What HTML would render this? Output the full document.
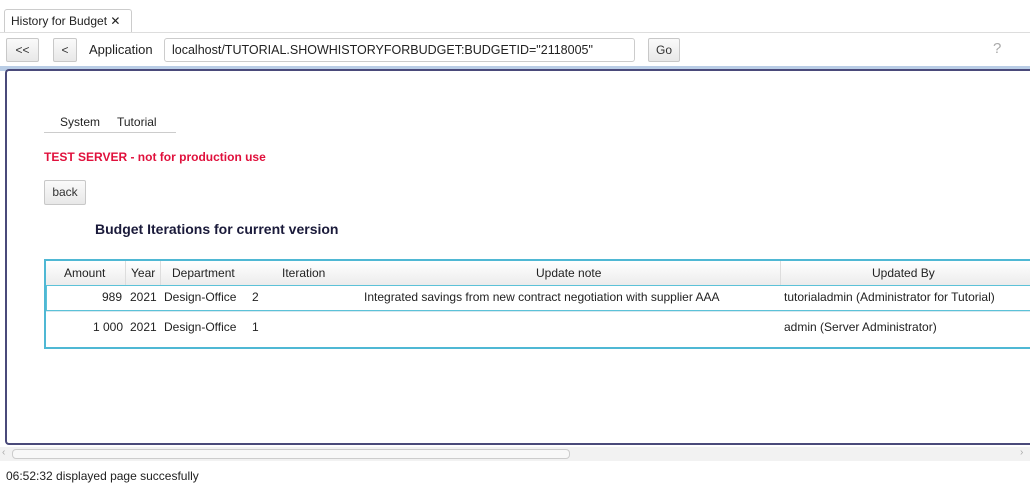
<!DOCTYPE html>
<html><head><style>
*{margin:0;padding:0;box-sizing:border-box}
body{width:1030px;height:487px;background:#fff;font-family:"Liberation Sans",sans-serif;font-size:12px;color:#222;position:relative;overflow:hidden}
.a{position:absolute;white-space:nowrap}
.btn{position:absolute;border:1px solid #c8c8c8;border-radius:2px;background:linear-gradient(#fafafa,#e8e8e8);text-align:center;font-size:12px;color:#333}
td,th{font-weight:normal;white-space:nowrap}
</style></head><body>
<div class="a" style="left:4px;top:9px;width:128px;height:24px;border:1px solid #ccc;border-bottom:none;border-radius:3px 3px 0 0;background:#fff;padding:4px 0 0 6px;font-size:12px">History for Budget ✕</div>
<div class="a" style="left:0;top:32px;width:1030px;height:1px;background:#ddd"></div>
<div class="btn" style="left:6px;top:38px;width:33px;height:24px;line-height:22px">&lt;&lt;</div>
<div class="btn" style="left:53px;top:38px;width:24px;height:24px;line-height:22px">&lt;</div>
<div class="a" style="left:89px;top:42px;font-size:13px">Application</div>
<div class="a" style="left:164px;top:38px;width:471px;height:24px;border:1px solid #ccc;border-radius:3px;padding:4px 0 0 7px;font-size:12.5px">localhost/TUTORIAL.SHOWHISTORYFORBUDGET:BUDGETID="2118005"</div>
<div class="btn" style="left:648px;top:38px;width:32px;height:24px;line-height:22px">Go</div>
<div class="a" style="left:993px;top:40px;color:#aaa;font-size:15px">?</div>
<div class="a" style="left:0;top:66px;width:1030px;height:5px;background:#b9cde6"></div>
<div class="a" style="left:5px;top:69px;width:1025px;height:376px;border:2px solid #4a4a7a;border-right:none;border-radius:4px 0 0 4px;background:#fff"></div>
<div class="a" style="left:44px;top:112px;width:132px;height:21px;border-bottom:1px solid #ccc"></div>
<div class="a" style="left:60px;top:115px">System</div>
<div class="a" style="left:117px;top:115px">Tutorial</div>
<div class="a" style="left:44px;top:150px;color:#e0103c;font-weight:bold;font-size:12px">TEST SERVER - not for production use</div>
<div class="btn" style="left:44px;top:180px;width:42px;height:25px;line-height:23px">back</div>
<div class="a" style="left:95px;top:221px;font-weight:bold;font-size:14px;color:#1a1a3a">Budget Iterations for current version</div>
<div class="a" style="left:44px;top:259px;width:986px;height:90px;border:2px solid #4fb8d4;border-right:none"></div>
<div class="a" style="left:46px;top:261px;width:984px;height:24px;background:linear-gradient(#fff,#ececec)"></div>
<div class="a" style="left:64px;top:266px">Amount</div>
<div class="a" style="left:125px;top:261px;width:1px;height:24px;background:#ddd"></div>
<div class="a" style="left:131px;top:266px">Year</div>
<div class="a" style="left:160px;top:261px;width:1px;height:24px;background:#ddd"></div>
<div class="a" style="left:172px;top:266px">Department</div>
<div class="a" style="left:282px;top:266px">Iteration</div>
<div class="a" style="left:536px;top:266px">Update note</div>
<div class="a" style="left:780px;top:261px;width:1px;height:24px;background:#ddd"></div>
<div class="a" style="left:872px;top:266px">Updated By</div>
<div class="a" style="left:46px;top:285px;width:984px;height:26px;border:1px solid #5cc2d8;border-right:none"></div>
<div class="a" style="left:46px;top:311px;width:984px;height:1px;background:#d8e8ef"></div>
<div class="a" style="left:102px;top:290px">989</div>
<div class="a" style="left:130px;top:290px">2021</div>
<div class="a" style="left:164px;top:290px">Design-Office</div>
<div class="a" style="left:252px;top:290px">2</div>
<div class="a" style="left:364px;top:290px">Integrated savings from new contract negotiation with supplier AAA</div>
<div class="a" style="left:784px;top:290px">tutorialadmin (Administrator for Tutorial)</div>
<div class="a" style="left:93px;top:320px">1 000</div>
<div class="a" style="left:130px;top:320px">2021</div>
<div class="a" style="left:164px;top:320px">Design-Office</div>
<div class="a" style="left:252px;top:320px">1</div>
<div class="a" style="left:784px;top:320px">admin (Server Administrator)</div>
<div class="a" style="left:0;top:447px;width:1030px;height:14px;background:#f2f2f2"></div>
<div class="a" style="left:12px;top:449px;width:558px;height:10px;border:1px solid #ccc;border-radius:4px;background:#f8f8f8"></div>
<div class="a" style="left:2px;top:447px;color:#aaa;font-size:10px">‹</div>
<div class="a" style="left:1020px;top:447px;color:#aaa;font-size:10px">›</div>
<div class="a" style="left:6px;top:469px;font-size:12px">06:52:32 displayed page succesfully</div>
</body></html>
